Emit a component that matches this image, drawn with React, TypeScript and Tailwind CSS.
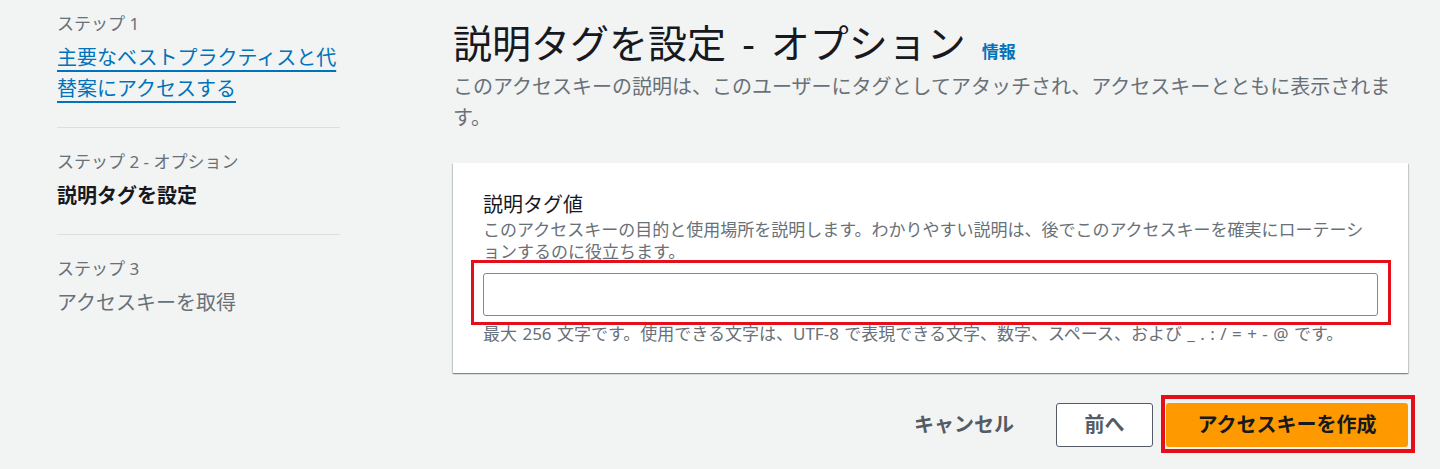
const FONT = { fontFamily: '"Noto Sans", "Noto Sans CJK JP", sans-serif' };

const STEPS = [
  { label: 'ステップ 1', title: '主要なベストプラクティスと代替案にアクセスする', state: 'link' },
  { label: 'ステップ 2 - オプション', title: '説明タグを設定', state: 'current' },
  { label: 'ステップ 3', title: 'アクセスキーを取得', state: 'todo' },
] as const;

function StepNav() {
  return (
    <nav className="w-[283px] shrink-0 pt-[13px]">
      {STEPS.map((s, i) => (
        <div
          key={s.label}
          className={i < STEPS.length - 1 ? 'border-b border-[#dcdfdf] pb-[23px] mb-[23px]' : ''}
        >
          <p className="text-[17px] leading-[22px] text-[#687078]">{s.label}</p>
          <p
            className={
              'mt-[7px] text-[20px] leading-[31px] ' +
              (s.state === 'link'
                ? 'text-[#0073bb] underline decoration-[#0073bb] underline-offset-[5px]'
                : s.state === 'current'
                  ? 'font-bold text-[#16191f]'
                  : 'text-[#687078]')
            }
          >
            {s.title}
          </p>
        </div>
      ))}
    </nav>
  );
}

export default function App() {
  return (
    <div className="min-h-[469px] bg-[#f2f3f3] text-[#16191f]" style={FONT}>
      <div className="flex pl-[57px]">
        <StepNav />

        <main className="ml-[113px] w-[955px] shrink-0">
          <div className="mt-[18px] flex items-baseline">
            <h1 className="text-[39px] font-normal leading-[50px] text-[#16191f] [word-spacing:6px]">
              説明タグを設定 - オプション
            </h1>
            <span className="ml-[16px] text-[17px] font-bold text-[#0073bb]">情報</span>
          </div>
          <p className="mt-[3px] text-[20px] leading-[31px] text-[#687078]">
            このアクセスキーの説明は、このユーザーにタグとしてアタッチされ、アクセスキーとともに表示されます。
          </p>

          <section className="mt-[30px] bg-white px-[30px] pt-[28px] pb-[28px] shadow-[0_1px_1px_0_rgba(0,28,36,0.3),1px_1px_1px_0_rgba(0,28,36,0.15),-1px_1px_1px_0_rgba(0,28,36,0.15)]">
            <label className="block text-[20px] leading-[28px] text-[#16191f]">説明タグ値</label>
            <p className="text-[17px] leading-[22px] text-[#687078]">
              このアクセスキーの目的と使用場所を説明します。わかりやすい説明は、後でこのアクセスキーを確実にローテーションするのに役立ちます。
            </p>
            <div className="relative mt-[10px]">
              <input
                type="text"
                className="block h-[43px] w-full rounded-[3px] border border-[#7d8998] bg-white px-3 text-[20px] outline-none"
              />
              <div className="pointer-events-none absolute -left-[12px] -right-[13px] -top-[13px] -bottom-[9px] border-[3px] border-[#e3101c]" />
            </div>
            <p className="mt-[7px] text-[17px] leading-[22px] text-[#687078] [word-spacing:1px]">
              最大 256 文字です。使用できる文字は、UTF-8 で表現できる文字、数字、スペース、および _ . : / = + - @ です。
            </p>
          </section>

          <div className="mt-[30px] flex items-center justify-end">
            <button className="mr-[42px] text-[20px] font-bold text-[#545b64]">キャンセル</button>
            <button className="h-[44px] w-[97px] rounded-[3px] border border-[#545b64] bg-white text-[20px] font-bold text-[#545b64]">
              前へ
            </button>
            <div className="relative ml-[13px]">
              <button className="h-[44px] w-[242px] rounded-[3px] bg-[#ff9900] text-[20px] font-bold text-[#16191f]">
                アクセスキーを作成
              </button>
              <div className="pointer-events-none absolute -left-[5px] -right-[7px] -top-[8px] -bottom-[6px] border-4 border-[#e3101c]" />
            </div>
          </div>
        </main>
      </div>
    </div>
  );
}
